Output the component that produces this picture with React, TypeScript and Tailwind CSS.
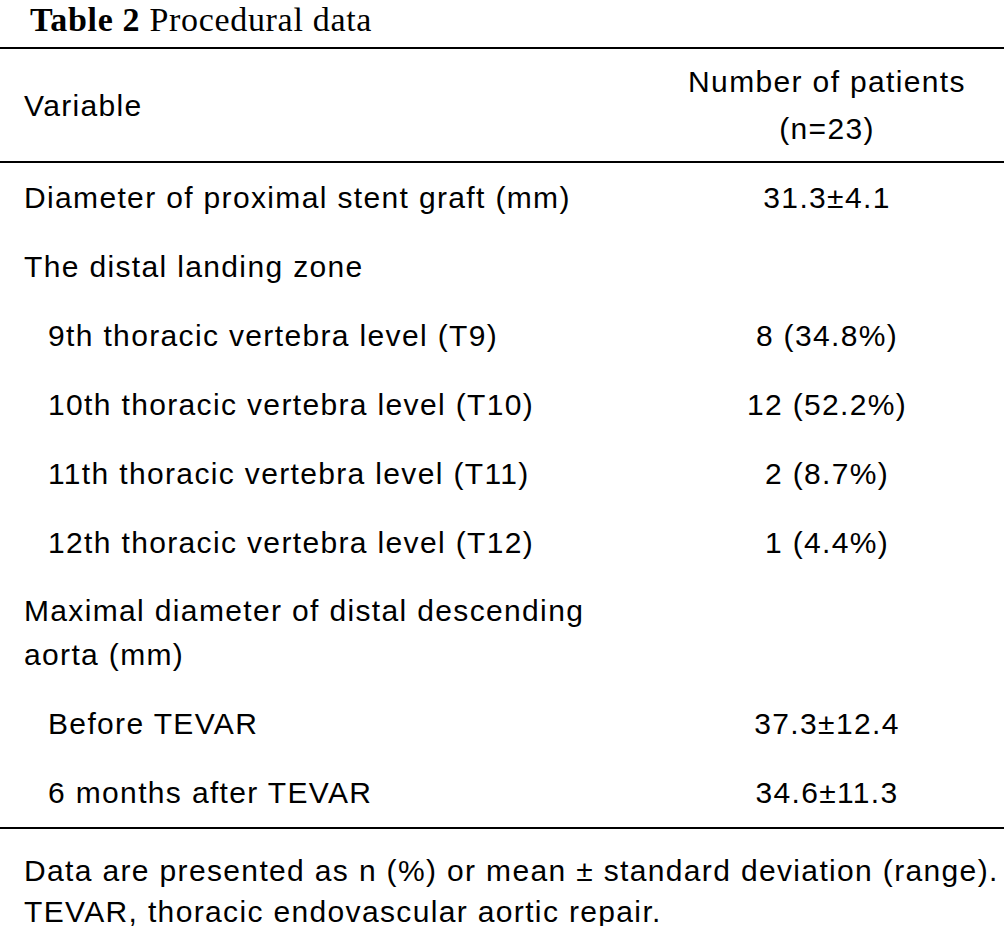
import React from "react"

type Row = {
  label: React.ReactNode
  value?: string
  indent?: boolean
  tall?: boolean
}

const rows: Row[] = [
  { label: "Diameter of proximal stent graft (mm)", value: "31.3±4.1" },
  { label: "The distal landing zone" },
  { label: "9th thoracic vertebra level (T9)", value: "8 (34.8%)", indent: true },
  { label: "10th thoracic vertebra level (T10)", value: "12 (52.2%)", indent: true },
  { label: "11th thoracic vertebra level (T11)", value: "2 (8.7%)", indent: true },
  { label: "12th thoracic vertebra level (T12)", value: "1 (4.4%)", indent: true },
  {
    label: (
      <>
        Maximal diameter of distal descending
        <br />
        aorta (mm)
      </>
    ),
    tall: true,
  },
  { label: "Before TEVAR", value: "37.3±12.4", indent: true },
  { label: "6 months after TEVAR", value: "34.6±11.3", indent: true },
]

export default function App() {
  return (
    <div className="min-h-screen w-[1004px] bg-white text-black">
      {/* Caption */}
      <div className="h-[47px] pl-[30px] pt-[3px] font-['Liberation_Serif',serif] text-[34px] leading-[34px] tracking-[0.02em]">
        <span className="font-bold">Table 2</span> Procedural data
      </div>

      <div className="font-['Liberation_Sans',Arial,sans-serif] text-[30px] tracking-[0.045em]">
        {/* Header */}
        <div className="flex h-[116px] items-center border-y-2 border-black">
          <div className="w-[650px] pl-6">Variable</div>
          <div className="flex-1 text-center leading-[47px]">
            Number of patients
            <br />
            (n=23)
          </div>
        </div>

        {/* Body */}
        <div className="border-b-2 border-black">
          {rows.map((row, i) => (
            <div
              key={i}
              className={`flex items-center ${row.tall ? "h-[112px] leading-[44px]" : "h-[69px]"}`}
            >
              <div className={`w-[650px] ${row.indent ? "pl-12" : "pl-6"}`}>{row.label}</div>
              <div className="flex-1 text-center">{row.value}</div>
            </div>
          ))}
        </div>

        {/* Footnote */}
        <div className="pl-6 pt-[21px] leading-[41px]">
          Data are presented as n (%) or mean ± standard deviation (range).
          <br />
          TEVAR, thoracic endovascular aortic repair.
        </div>
      </div>
    </div>
  )
}
